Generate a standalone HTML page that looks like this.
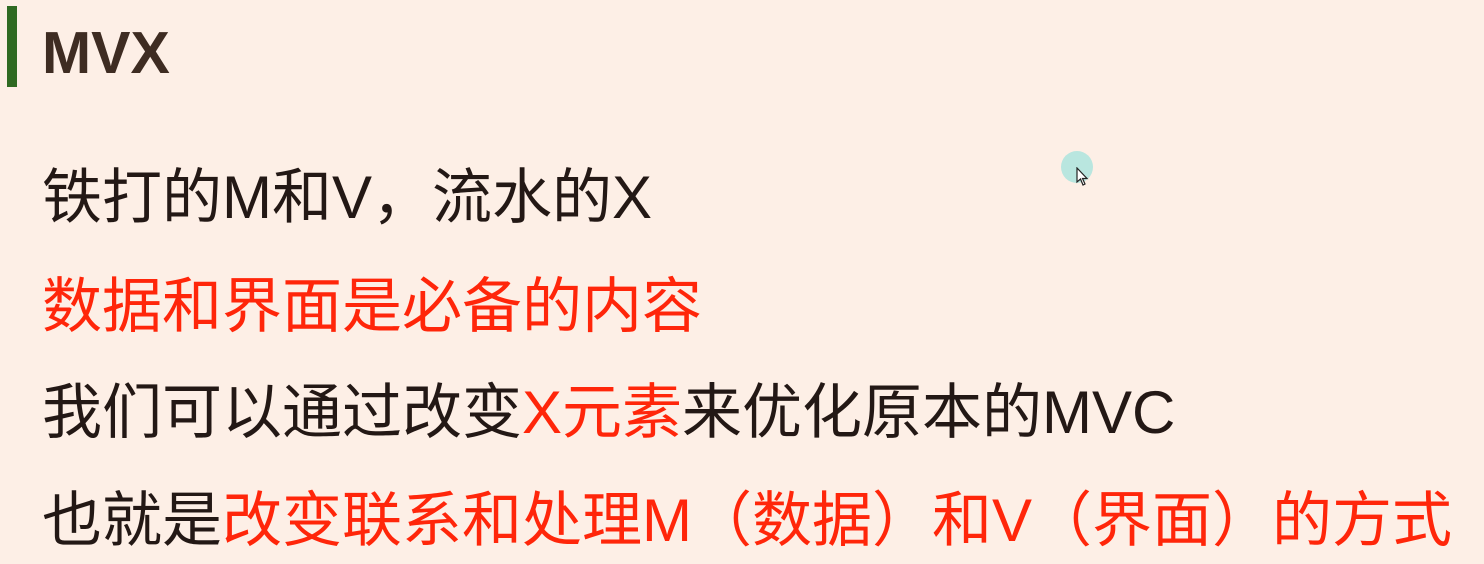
<!DOCTYPE html>
<html><head><meta charset="utf-8"><style>
html,body{margin:0;padding:0}
body{width:1484px;height:564px;background:#fdefe6;position:relative;overflow:hidden;font-family:"Liberation Sans","Noto Sans CJK SC",sans-serif;color:#231815}
.bar{position:absolute;left:7px;top:6px;width:10px;height:81px;background:#2f6a22}
.h{position:absolute;left:42px;top:23px;font-family:"Liberation Sans",sans-serif;font-weight:bold;font-size:59px;line-height:60px;color:#3e2c22}
.l{position:absolute;left:42px;font-size:60px;line-height:60px;white-space:nowrap}
.r{color:#ff260a}
.dot{position:absolute;left:1061px;top:151px;width:32px;height:32px;border-radius:50%;background:#b9e6df}
</style></head><body>
<div class="bar"></div>
<div class="h">MVX</div>
<div class="l" style="top:168px">铁打的M和V，流水的X</div>
<div class="l r" style="top:277px">数据和界面是必备的内容</div>
<div class="l" style="top:383px">我们可以通过改变<span class="r">X元素</span>来优化原本的MVC</div>
<div class="l" style="top:491px">也就是<span class="r">改变联系和处理M（数据）和V（界面）的方式</span></div>
<div class="dot"></div>
<svg style="position:absolute;left:1076px;top:167px" width="14" height="20" viewBox="0 0 14 20"><path d="M1 1 L1 15 L4.5 12 L7 18 L9 17 L6.5 11.5 L11 11.5 Z" fill="#fff" stroke="#222" stroke-width="1.2"/></svg>
</body></html>
